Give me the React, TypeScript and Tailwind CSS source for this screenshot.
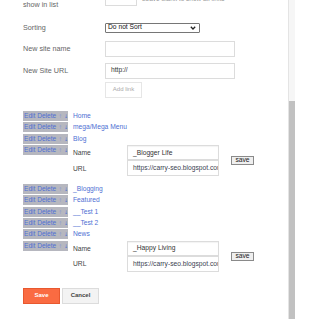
import React from 'react'

const font = { fontFamily: '"Liberation Sans", Arial, sans-serif' }
const arrowFont = { fontFamily: '"DejaVu Sans", sans-serif' }

const EditBox = () => (
  <div className="flex h-[10px] w-[45px] shrink-0 items-center bg-[#b6b7bf] pl-[1px] text-[6.6px] leading-[10px] whitespace-nowrap">
    <span className="text-[#4f6fd3]">Edit</span>
    <span className="ml-[1.8px] text-[#4f6fd3]">Delete</span>
    <span className="ml-[2px] text-[5px] text-[#8e9cd2]" style={arrowFont}>↑</span>
    <span className="ml-[1.5px] text-[5px] text-[#4f6fd3]" style={arrowFont}>↓</span>
  </div>
)

const LinkRow = ({ label }: { label: string }) => (
  <div className="flex h-[11.33px] items-start">
    <EditBox />
    <span className="ml-[5px] text-[6.7px] leading-[10px] text-[#4f6fd3] whitespace-nowrap">{label}</span>
  </div>
)

const EditRow = ({ name }: { name: string }) => (
  <div className="flex items-start">
    <EditBox />
    <div className="ml-[5px] flex flex-col">
      <div className="flex h-[15.5px] items-center">
        <span className="w-[54px] text-[6.7px] leading-[9px] text-[#444]">Name</span>
        <div className="flex h-[15.5px] w-[92px] items-center border border-[#dcdcdc] pl-[5px] text-[6.7px] text-[#333] shadow-[inset_0_1px_1px_rgba(0,0,0,0.05)]">
          {name}
        </div>
      </div>
      <div className="flex h-[15.5px] items-center">
        <span className="w-[54px] text-[6.7px] leading-[9px] text-[#444]">URL</span>
        <div className="flex h-[15.5px] w-[92px] items-center overflow-hidden border border-[#dcdcdc] pl-[5px] text-[6.7px] text-[#3a4150] whitespace-nowrap">
          https://carry-seo.blogspot.com
        </div>
      </div>
    </div>
    <div className="ml-[12px] mt-[11px] flex h-[9px] w-[23px] items-center justify-center border border-[#8a8a8a] bg-[#efefef] text-[6.7px] text-[#222]">
      save
    </div>
  </div>
)

const App = () => {
  return (
    <div className="flex h-[319px] w-[295px] overflow-hidden bg-white" style={font}>
      <div className="flex-1 pl-[23px]">
        {/* number of links */}
        <div className="-mt-[10px] flex items-start">
          <span className="w-[82px] pt-[9.5px] text-[7.2px] leading-[9px] text-[#666]">show in list</span>
          <div className="h-[16px] w-[32px] border border-[#dcdcdc]" />
          <span className="ml-[5px] mt-[4px] text-[6.5px] leading-[9px] text-[#999] whitespace-nowrap">Leave blank to show all links</span>
        </div>

        {/* sorting */}
        <div className="mt-[14px] flex h-[10px] items-center">
          <span className="w-[82px] text-[7.2px] leading-[9px] text-[#666]">Sorting</span>
          <div className="flex h-[10px] w-[95px] items-center justify-between rounded-[1px] border border-[#767676] pl-[2px] pr-[3px] text-[6.7px] text-[#111]">
            <span>Do not Sort</span>
            <svg width="6" height="4" viewBox="0 0 6 4">
              <path d="M0.8 0.8 L3 3 L5.2 0.8" fill="none" stroke="#222" strokeWidth="1.3" />
            </svg>
          </div>
        </div>

        {/* new site name */}
        <div className="mt-[8px] flex h-[16px] items-center">
          <span className="w-[82px] text-[7.2px] leading-[9px] text-[#666]">New site name</span>
          <div className="h-[16px] w-[130px] border border-[#dcdcdc]" />
        </div>

        {/* new site url */}
        <div className="mt-[6px] flex h-[16px] items-center">
          <span className="w-[82px] text-[7.2px] leading-[9px] text-[#666]">New Site URL</span>
          <div className="flex h-[16px] w-[130px] items-center border border-[#dcdcdc] pl-[5px] text-[6.7px] text-[#333]">
            http://
          </div>
        </div>

        <div className="mt-[3px] pl-[82px]">
          <div className="flex h-[16px] w-[37px] items-center justify-center border border-[#e6e6e6] text-[6px] text-[#aaa]">
            Add link
          </div>
        </div>

        {/* link list */}
        <div className="mt-[13.5px] flex flex-col">
          <LinkRow label="Home" />
          <LinkRow label="mega/Mega Menu" />
          <LinkRow label="Blog" />
          <EditRow name="_Blogger Life" />
          <div className="mt-[8px]" />
          <LinkRow label="_Blogging" />
          <LinkRow label="Featured" />
          <LinkRow label="__Test 1" />
          <LinkRow label="__Test 2" />
          <LinkRow label="News" />
          <EditRow name="_Happy Living" />
        </div>

        {/* actions */}
        <div className="mt-[16px] flex gap-[2px]">
          <div className="flex h-[16px] w-[37px] items-center justify-center border border-[#e8582f] bg-[#fa6b42] text-[6px] font-bold text-white">
            Save
          </div>
          <div className="flex h-[16px] w-[37px] items-center justify-center border border-[#dcdcdc] bg-[#f3f3f3] text-[6px] font-bold text-[#444]">
            Cancel
          </div>
        </div>
      </div>

      {/* scrollbar */}
      <div className="flex w-[7px] flex-col border-l border-[#e4e4e4] bg-[#f6f6f6]">
        <div className="h-[101px]" />
        <div className="flex-1 bg-[#c1c1c1]" />
      </div>
    </div>
  )
}

export default App
